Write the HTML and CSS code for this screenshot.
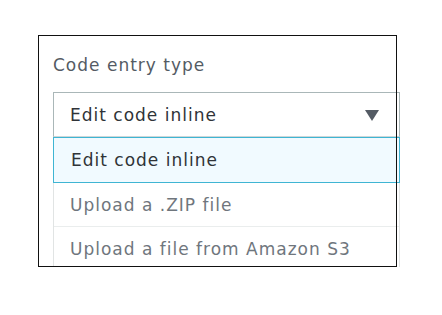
FILE: index.html
```html
<!DOCTYPE html>
<html lang="en">
<head>
  <meta charset="UTF-8" />
  <title>Code entry type</title>
  <link rel="stylesheet" href="styles.css">
</head>
<body>
  <div class="panel">
    <div class="field-label">Code entry type</div>
    <div class="select">
      <span class="select-value">Edit code inline</span>
      <span class="caret"></span>
    </div>
    <ul class="options">
      <li class="option selected">Edit code inline</li>
      <li class="option">Upload a .ZIP file</li>
      <li class="option">Upload a file from Amazon S3</li>
    </ul>
  </div>
</body>
</html>
```

FILE: styles.css
```css
:root {
  --label: #545b64;
  --text: #2f3338;
  --muted: #6f767d;
  --select-border: #aab7b8;
  --focus: #3fb5d3;
  --focus-bg: #f1faff;
  --divider: #eaeded;
}

html, body {
  margin: 0;
  background: #fff;
  font-family: "DejaVu Sans", "Noto Sans", Arial, sans-serif;
  letter-spacing: 1px;
}

.panel {
  position: relative;
  margin: 35px 0 0 38px;
  width: 359px;
  height: 232px;
  box-sizing: border-box;
  padding: 18px 0 0 15px;
}

/* annotation frame drawn on top of the control */
.panel::after {
  content: "";
  position: absolute;
  left: 0;
  top: 0;
  right: 0;
  bottom: 0;
  border: 1.5px solid #111;
  pointer-events: none;
}

.field-label {
  font-size: 17px;
  line-height: 24px;
  color: var(--label);
  margin-bottom: 15px;
}

.select {
  width: 347px;
  height: 45px;
  box-sizing: border-box;
  border: 1px solid var(--select-border);
  border-bottom-color: #cfd6d7;
  display: flex;
  align-items: center;
  justify-content: space-between;
  padding: 0 20px 0 16px;
  font-size: 17px;
  color: var(--text);
}

.caret {
  width: 0;
  height: 0;
  border-left: 7.5px solid transparent;
  border-right: 7.5px solid transparent;
  border-top: 11px solid var(--label);
  margin-top: 1px;
}

.options {
  list-style: none;
  margin: 0;
  padding: 0;
  width: 347px;
  font-size: 17px;
  border: 1px solid #e1e4e4;
  border-top: none;
  box-sizing: border-box;
}

.option {
  height: 44px;
  display: flex;
  align-items: center;
  padding-left: 16px;
  color: var(--muted);
  border-top: 1px solid var(--divider);
  box-sizing: border-box;
}

.option.selected {
  height: 46px;
  margin: 0 -1px;
  padding-left: 17px;
  background: var(--focus-bg);
  border: 1px solid var(--focus);
  color: var(--text);
}

.option.selected + .option {
  border-top: none;
  height: 43px;
}
```
